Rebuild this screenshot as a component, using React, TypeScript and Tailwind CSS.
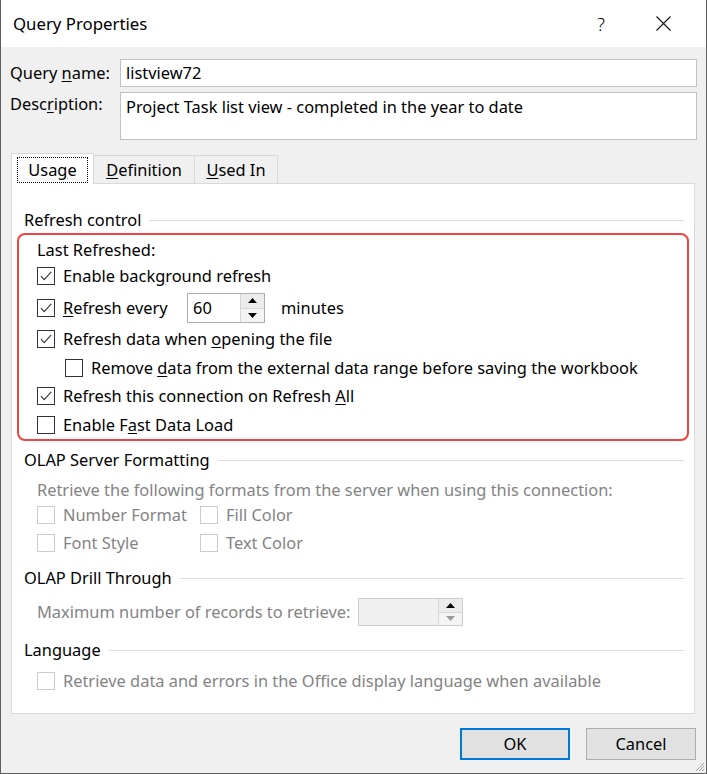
import React from "react";

const font = "font-['Noto_Sans','Open_Sans',sans-serif]";

function Check({ checked = false, disabled = false }: { checked?: boolean; disabled?: boolean }) {
  return (
    <span
      className={`flex h-[18px] w-[18px] shrink-0 items-center justify-center border bg-white ${
        disabled ? "border-[#cccccc]" : "border-[#333333]"
      }`}
    >
      {checked && (
        <svg width="14" height="14" viewBox="0 0 14 14" fill="none">
          <path d="M2 7.2 L5.2 10.6 L12.2 2.8" stroke="#3a3a3a" strokeWidth="1.2" />
        </svg>
      )}
    </span>
  );
}

function Row({
  checked,
  disabled,
  children,
  className = "",
}: {
  checked?: boolean;
  disabled?: boolean;
  children: React.ReactNode;
  className?: string;
}) {
  return (
    <div className={`flex h-[22px] items-center gap-[8px] ${className}`}>
      <Check checked={checked} disabled={disabled} />
      <span className={`whitespace-nowrap ${disabled ? "text-[#838383]" : "text-black"}`}>{children}</span>
    </div>
  );
}

function Header({ children, className = "" }: { children: React.ReactNode; className?: string }) {
  return (
    <div className={`flex h-[22px] items-center gap-[8px] ${className}`}>
      <span className="whitespace-nowrap">{children}</span>
      <span className="h-px flex-1 bg-[#dcdcdc]" />
    </div>
  );
}

function Spin({ disabled = false, value }: { disabled?: boolean; value?: string }) {
  const tri = disabled ? "#9a9a9a" : "#000";
  return (
    <div
      className={`flex h-full border ${disabled ? "border-[#cccccc] bg-[#f0f0f0]" : "border-[#adadad] bg-white"}`}
    >
      <div className="flex flex-1 items-center pl-[5px]">{value}</div>
      <div className="flex w-[24px] flex-col border-l border-[#d6d6d6]">
        <div className="flex flex-1 items-center justify-center border-b border-[#d6d6d6] bg-[#ececec]">
          <svg width="9" height="5" viewBox="0 0 9 5">
            <path d="M0 5 L4.5 0 L9 5 Z" fill="#000" />
          </svg>
        </div>
        <div className="flex flex-1 items-center justify-center bg-[#f4f4f4]">
          <svg width="9" height="5" viewBox="0 0 9 5">
            <path d="M0 0 L9 0 L4.5 5 Z" fill={tri} />
          </svg>
        </div>
      </div>
    </div>
  );
}

export default function App() {
  return (
    <div
      className={`${font} relative flex h-[774px] w-[707px] flex-col border-x border-b border-[#5f5f5f] text-[16.4px] leading-[22px] text-black`}
    >
      {/* title bar */}
      <div className="flex h-[47px] shrink-0 items-center bg-white pl-[12px]">
        <span className="flex-1 text-[16.8px]">Query Properties</span>
        <span className="mr-[51px] text-[18px] font-light">?</span>
        <svg className="mr-[35px]" width="15" height="15" viewBox="0 0 15 15">
          <path d="M0.5 0.5 L14.5 14.5 M14.5 0.5 L0.5 14.5" stroke="#111" strokeWidth="1.1" />
        </svg>
      </div>

      {/* body */}
      <div className="flex flex-1 flex-col bg-[#f0f0f0] pl-[9px] pr-[9px] pt-[12px]">
        <div className="flex h-[28px] items-center">
          <span className="w-[110px]">
            Query <u className="underline-offset-2">n</u>ame:
          </span>
          <div className="flex h-full flex-1 items-center border border-[#c2c2c2] bg-white pl-[5px]">
            listview72
          </div>
        </div>
        <div className="mt-[5px] flex h-[48px]">
          <span className="w-[110px] pt-[1px]">
            Desc<u className="underline-offset-2">r</u>iption:
          </span>
          <div className="h-full flex-1 border border-[#c2c2c2] bg-white pl-[5px] pt-[3px]">
            Project Task list view - completed in the year to date
          </div>
        </div>

        {/* tabs */}
        <div className="ml-[1px] mr-[2px] mt-[13px] flex items-end">
          <div className="relative z-10 -mb-px flex h-[31px] w-[83px] items-center justify-center border-x border-t border-[#d9d9d9] bg-white">
            <span className="mt-[2px] flex h-[26px] w-[71px] items-center justify-center border border-dotted border-black">
              Usa<u className="underline-offset-2">g</u>e
            </span>
          </div>
          <div className="flex h-[28px] w-[101px] items-center justify-center border-r border-t border-[#d9d9d9] bg-[#f0f0f0]">
            <span>
              <u className="underline-offset-2">D</u>efinition
            </span>
          </div>
          <div className="flex h-[28px] w-[83px] items-center justify-center border-r border-t border-[#d9d9d9] bg-[#f0f0f0]">
            <span>
              <u className="underline-offset-2">U</u>sed In
            </span>
          </div>
        </div>

        {/* tab panel */}
        <div className="ml-[1px] mr-[2px] flex h-[531px] flex-col border border-[#d9d9d9] bg-white pl-[12px] pr-[10px] pt-[25px]">
          <Header>Refresh control</Header>

          <div className="ml-[-7px] mr-[-5px] mt-[2px] flex flex-col rounded-[8px] border-2 border-[#f04343] pb-[3px] pl-[18px] pt-[4px]">
            <div className="flex h-[22px] items-center">Last Refreshed:</div>
            <Row checked className="mt-[4px]">
              Enable back<u className="underline-offset-2">g</u>round refresh
            </Row>
            <div className="mt-[6px] flex h-[30px] items-center">
              <Check checked />
              <span className="ml-[8px] w-[124px]">
                <u className="underline-offset-2">R</u>efresh every
              </span>
              <div className="h-[30px] w-[78px]">
                <Spin value="60" />
              </div>
              <span className="ml-[16px]">minutes</span>
            </div>
            <Row checked className="mt-[5px]">
              Refresh data when <u className="underline-offset-2">o</u>pening the file
            </Row>
            <Row className="ml-[28px] mt-[7px]">
              Remove <u className="underline-offset-2">d</u>ata from the external data range before saving the workbook
            </Row>
            <Row checked className="mt-[6px]">
              Refresh this connection on Refresh <u className="underline-offset-2">A</u>ll
            </Row>
            <Row className="mt-[7px]">
              Enable F<u className="underline-offset-2">a</u>st Data Load
            </Row>
          </div>

          <Header className="mt-[8px]">OLAP Server Formatting</Header>
          <div className="mt-[8px] flex h-[22px] items-center whitespace-nowrap pl-[13px] text-[#838383]">
            Retrieve the following formats from the server when using this connection:
          </div>
          <div className="mt-[3px] grid grid-cols-[163px_1fr] pl-[13px]">
            <Row disabled>Number Format</Row>
            <Row disabled>Fill Color</Row>
            <Row disabled className="mt-[6px]">
              Font Style
            </Row>
            <Row disabled className="mt-[6px]">
              Text Color
            </Row>
          </div>

          <Header className="mt-[13px]">OLAP Drill Through</Header>
          <div className="mt-[9px] flex h-[28px] items-center pl-[13px]">
            <span className="w-[321px] whitespace-nowrap text-[#838383]">Maximum number of records to retrieve:</span>
            <div className="h-[28px] w-[105px]">
              <Spin disabled />
            </div>
          </div>

          <Header className="mt-[13px]">Language</Header>
          <Row disabled className="ml-[13px] mt-[9px]">
            Retrieve data and errors in the Office display language when available
          </Row>
        </div>

        {/* buttons */}
        <div className="mt-[14px] flex justify-end gap-[16px] pr-[1px]">
          <button className="flex h-[32px] w-[110px] items-center justify-center border-2 border-[#0078d7] bg-[#e1e1e1]">
            OK
          </button>
          <button className="flex h-[32px] w-[110px] items-center justify-center border border-[#adadad] bg-[#e1e1e1]">
            Cancel
          </button>
        </div>
      </div>

      {/* resize grip */}
      <svg className="absolute bottom-[1px] right-[1px]" width="12" height="12" viewBox="0 0 12 12">
        <path d="M11 3 L3 11 M11 6 L6 11 M11 9 L9 11" stroke="#a0a0a0" strokeWidth="1" />
      </svg>
    </div>
  );
}
